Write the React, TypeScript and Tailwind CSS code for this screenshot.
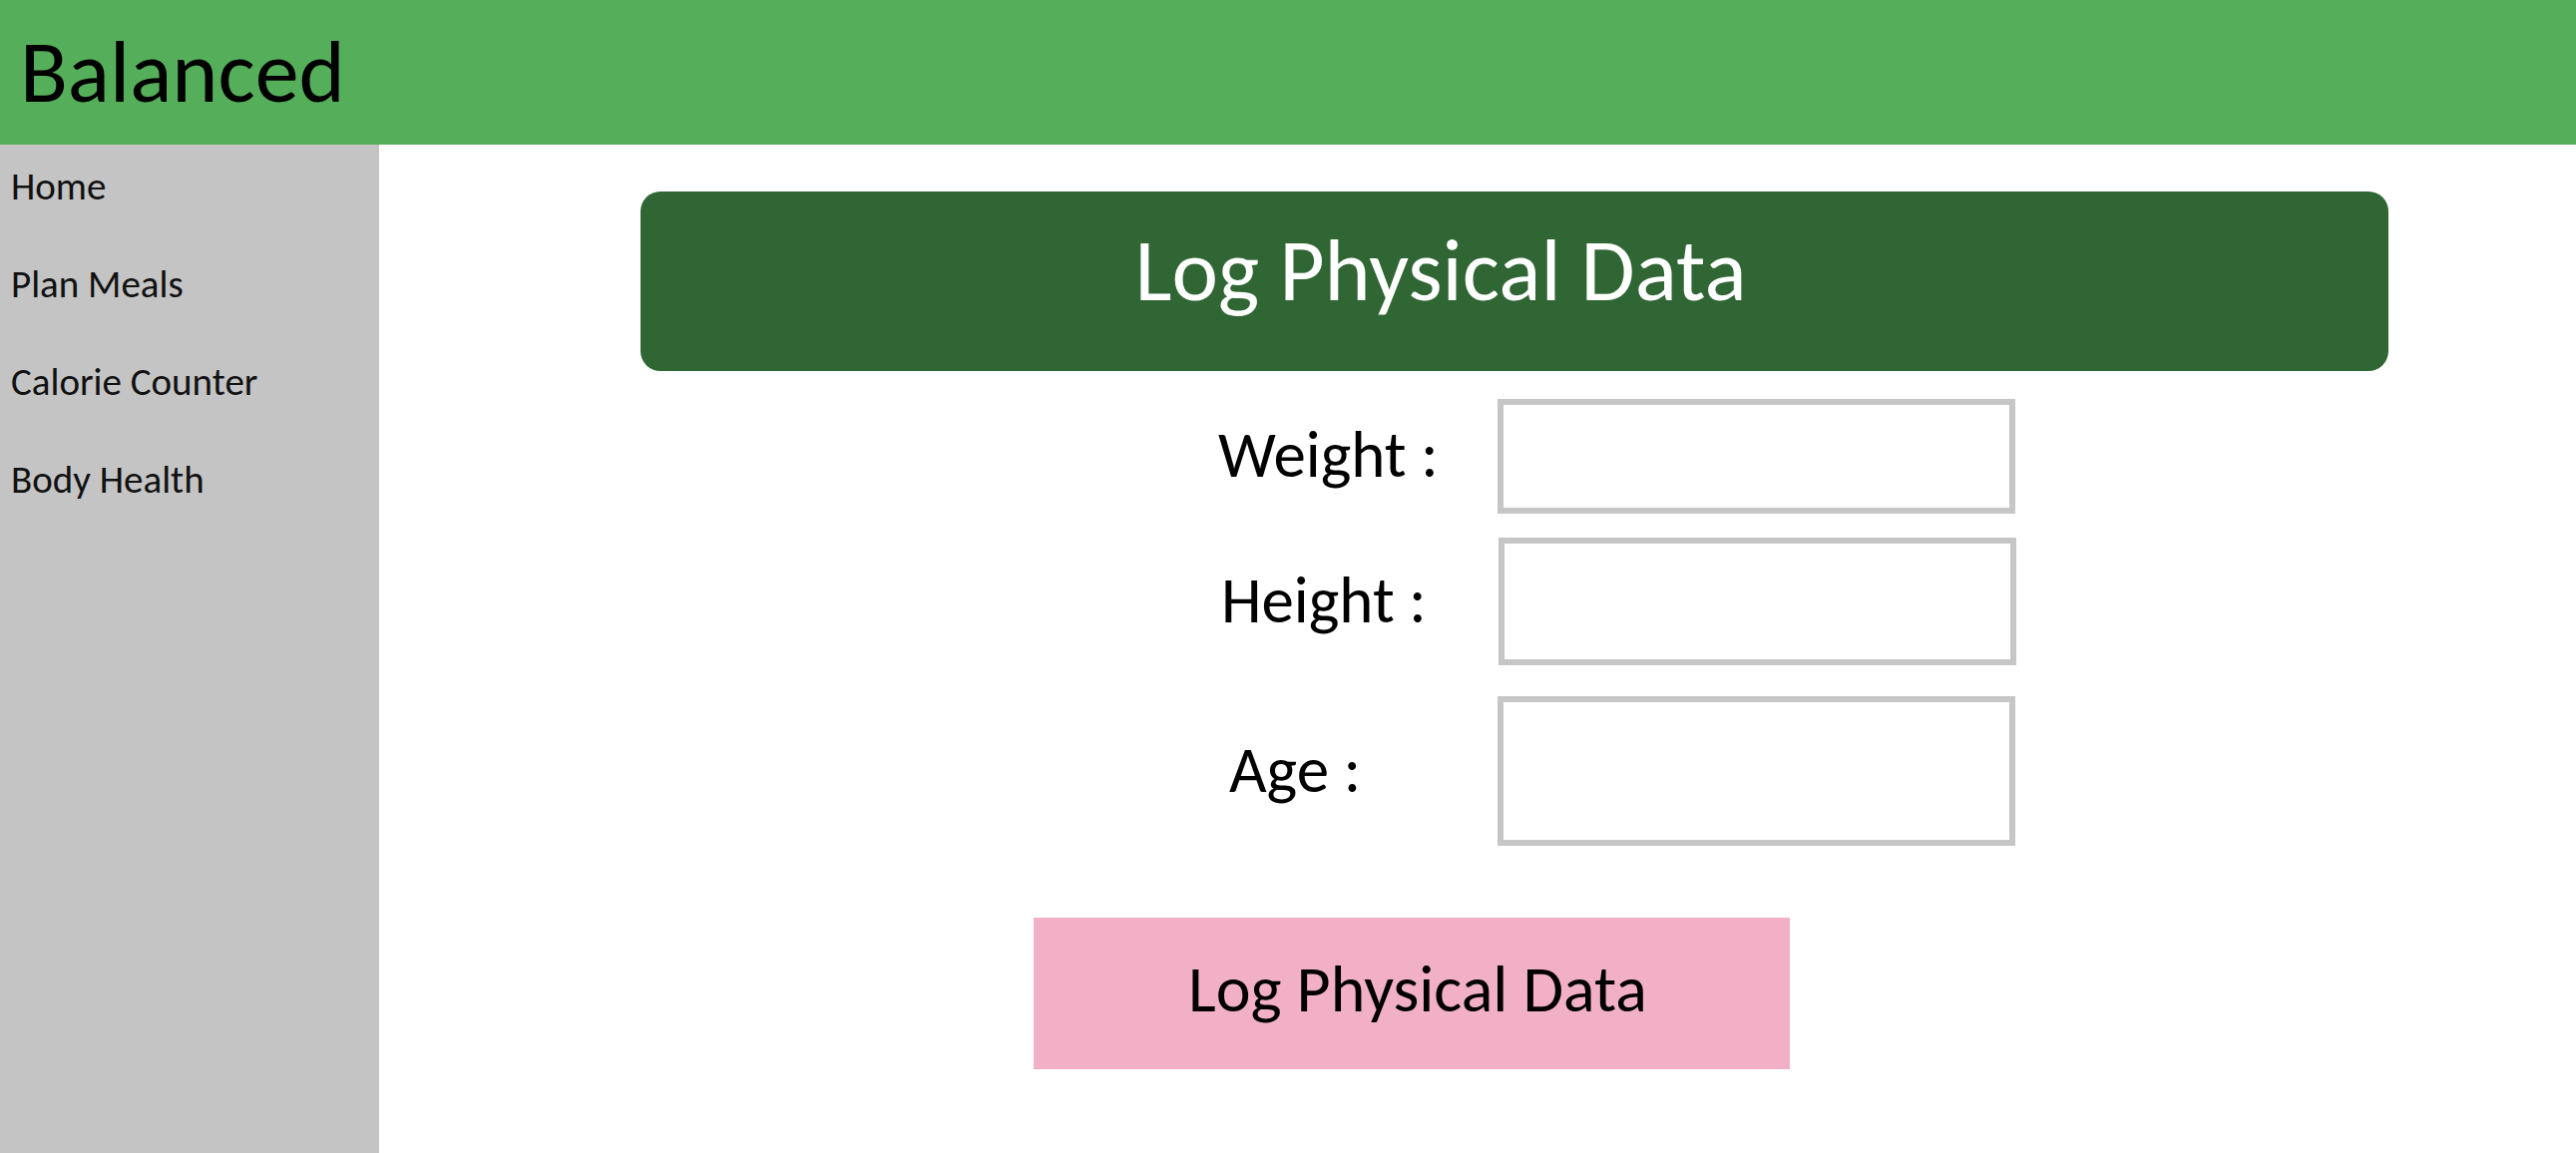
const font = { fontFamily: '"Carlito", "Lato", sans-serif' };

const navItems = ["Home", "Plan Meals", "Calorie Counter", "Body Health"];

const fields = [
  { label: "Weight :", labelClass: "pl-0", boxClass: "h-[115px] ml-0" },
  { label: "Height :", labelClass: "pl-[3px]", boxClass: "h-[128px] ml-[1px]" },
  { label: "Age :", labelClass: "pl-[11px]", boxClass: "h-[150px] ml-0" },
];

function Sidebar() {
  return (
    <nav className="w-[380px] shrink-0 bg-[#c4c4c4] pt-[14px]">
      <ul>
        {navItems.map((item) => (
          <li
            key={item}
            className="h-[98px] pl-[11px] text-[39px] leading-[56px] text-[#111]"
          >
            {item}
          </li>
        ))}
      </ul>
    </nav>
  );
}

function PhysicalDataForm() {
  return (
    <div className="flex flex-col">
      <div className="ml-[262px] mt-[47px] flex h-[180px] w-[1752px] items-center justify-center rounded-[20px] bg-[#2f6633] pb-[22px] pr-[148px]">
        <h1 className="text-[88px] leading-none text-white">Log Physical Data</h1>
      </div>

      <div className="ml-[841px] mt-[28px] flex flex-col gap-[24px]">
        {fields.map((f, i) => (
          <div key={f.label} className={i === 2 ? "mt-[7px] flex items-center" : "flex items-center"}>
            <label className={`w-[280px] shrink-0 pb-[4px] text-[65px] leading-none text-black ${f.labelClass}`}>
              {f.label}
            </label>
            <input
              className={`w-[519px] border-[6px] border-[#c6c6c6] bg-white outline-none ${f.boxClass}`}
            />
          </div>
        ))}
      </div>

      <button className="ml-[656px] mt-[72px] flex h-[152px] w-[758px] items-center justify-center bg-[#f2b0c7] pb-[8px] pl-[12px] text-[66px] leading-none text-black">
        Log Physical Data
      </button>
    </div>
  );
}

export default function App() {
  return (
    <div className="flex h-[1156px] w-[2582px] flex-col overflow-hidden bg-white" style={font}>
      <header className="flex h-[145px] shrink-0 items-center bg-[#55af5a] pb-[2px] pl-[20px]">
        <span className="text-[88px] leading-none text-black">Balanced</span>
      </header>
      <div className="flex flex-1">
        <Sidebar />
        <main className="flex-1">
          <PhysicalDataForm />
        </main>
      </div>
    </div>
  );
}
